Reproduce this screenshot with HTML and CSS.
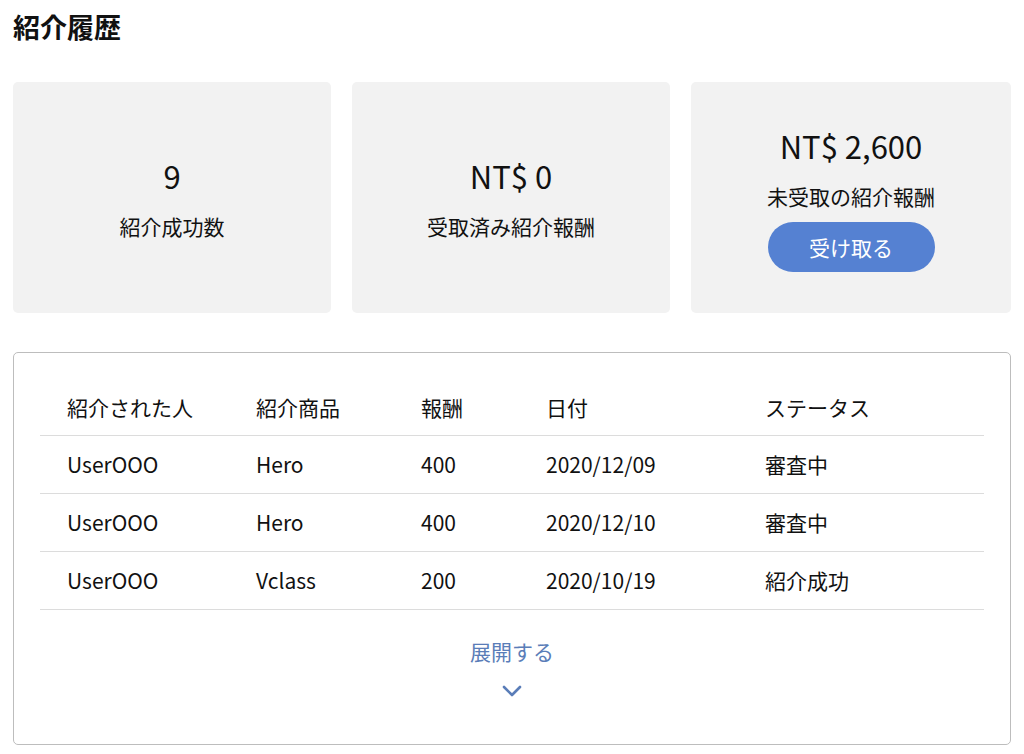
FILE: index.html
```html
<!DOCTYPE html>
<html lang="ja">
<head>
<meta charset="utf-8">
<title>紹介履歴</title>
<link rel="stylesheet" href="styles.css">
</head>
<body>
<main class="page">
  <h1 class="title">紹介履歴</h1>

  <section class="stats">
    <div class="stat">
      <div class="stat-value">9</div>
      <div class="stat-label">紹介成功数</div>
    </div>
    <div class="stat">
      <div class="stat-value">NT$ 0</div>
      <div class="stat-label">受取済み紹介報酬</div>
    </div>
    <div class="stat">
      <div class="stat-value">NT$ 2,600</div>
      <div class="stat-label">未受取の紹介報酬</div>
      <button class="claim" type="button">受け取る</button>
    </div>
  </section>

  <section class="history">
    <table class="history-table">
      <colgroup>
        <col class="c-user">
        <col class="c-product">
        <col class="c-reward">
        <col class="c-date">
        <col class="c-status">
      </colgroup>
      <thead>
        <tr><th>紹介された人</th><th>紹介商品</th><th>報酬</th><th>日付</th><th>ステータス</th></tr>
      </thead>
      <tbody>
        <tr><td>UserOOO</td><td>Hero</td><td>400</td><td>2020/12/09</td><td>審査中</td></tr>
        <tr><td>UserOOO</td><td>Hero</td><td>400</td><td>2020/12/10</td><td>審査中</td></tr>
        <tr><td>UserOOO</td><td>Vclass</td><td>200</td><td>2020/10/19</td><td>紹介成功</td></tr>
      </tbody>
    </table>
    <button class="expand" type="button">
      <span class="expand-text">展開する</span>
      <svg class="chevron" width="20" height="12" viewBox="0 0 20 12" aria-hidden="true">
        <path d="M2 2 L10 10 L18 2" fill="none" stroke="currentColor" stroke-width="2.6" stroke-linecap="round" stroke-linejoin="round"/>
      </svg>
    </button>
  </section>
</main>
</body>
</html>
```

FILE: styles.css
```css
* { box-sizing: border-box; }

html, body {
  margin: 0;
  background: #ffffff;
}

body {
  font-family: "Noto Sans CJK JP", "Noto Sans", sans-serif;
  color: #111;
}

.page {
  padding: 8px 13px 0 13px;
}

.title {
  margin: 0;
  font-size: 27px;
  font-weight: 700;
  line-height: 38px;
}

.stats {
  margin-top: 36px;
  display: grid;
  grid-template-columns: 318px 318px 320px;
  column-gap: 21px;
}

.stat {
  height: 231px;
  background: #f2f2f2;
  border-radius: 5px;
  display: flex;
  flex-direction: column;
  align-items: center;
  justify-content: center;
  padding-top: 2px;
}

.stat-value {
  font-size: 31px;
  line-height: 40px;
}

.stat-label {
  font-size: 21px;
  line-height: 30px;
  margin-top: 15px;
}

.claim {
  margin-top: 11px;
  width: 167px;
  height: 50px;
  border: none;
  border-radius: 25px;
  background: #5581d2;
  color: #fff;
  font-family: inherit;
  font-size: 21px;
  padding: 0;
}

.history {
  margin-top: 39px;
  border: 1.5px solid #bdbdbd;
  border-radius: 5px;
  padding: 24px 26px 0 26px;
  height: 393px;
  display: flex;
  flex-direction: column;
}

.history-table {
  width: 944px;
  border-collapse: collapse;
  table-layout: fixed;
}

.c-user { width: 189px; }
.c-product { width: 165px; }
.c-reward { width: 125px; }
.c-date { width: 219px; }
.c-status { width: 246px; }

.history-table th,
.history-table td {
  text-align: left;
  font-weight: 400;
  font-size: 21px;
  height: 58px;
  padding: 0 0 0 27px;
  border-bottom: 1px solid #dcdcdc;
  vertical-align: middle;
}

.history-table th {
  padding-top: 2px;
}

.expand {
  align-self: center;
  margin-top: 26px;
  border: none;
  background: none;
  padding: 0;
  color: #5a7db8;
  font-family: inherit;
  display: flex;
  flex-direction: column;
  align-items: center;
}

.expand-text {
  font-size: 21px;
  line-height: 30px;
}

.chevron {
  margin-top: 19px;
}
```
